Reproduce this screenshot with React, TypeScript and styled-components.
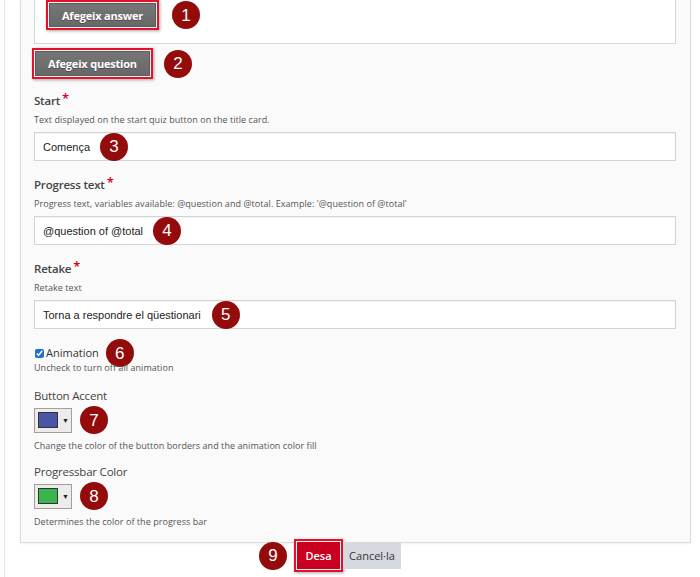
import React from "react"
import styled, { createGlobalStyle } from "styled-components"

const GlobalStyle = createGlobalStyle`
  html, body {
    margin: 0;
    padding: 0;
    background: #fff;
  }
  body {
    font-family: "Open Sans", "Liberation Sans", sans-serif;
  }
`

const Page = styled.div`
  width: 700px;
  height: 577px;
  overflow: hidden;
  box-sizing: border-box;
  padding-left: 4px;
`

const Rail = styled.div`
  border-left: 1px solid #e3e3e3;
  padding-left: 15px;
  height: 100%;
  box-sizing: border-box;
  width: 687px;
`

const Panel = styled.div`
  background: #fafafa;
  border: 1px solid #dcdcdc;
  border-top: none;
  box-shadow: 0 1px 2px rgba(0, 0, 0, 0.06);
  padding: 0 14px 13px 13px;
`

const AnswersBox = styled.div`
  display: flex;
  align-items: center;
  background: #fff;
  border: 1px solid #d6d6d6;
  border-top: none;
  padding: 0 0 13px 11px;
`

const Row = styled.div<{ $top?: number; $gap?: number; $left?: number }>`
  display: flex;
  align-items: center;
  margin-top: ${(p) => p.$top ?? 0}px;
  margin-left: ${(p) => p.$left ?? 0}px;
  gap: ${(p) => p.$gap ?? 10}px;
`

const Highlight = styled.span`
  display: inline-flex;
  border: 2px solid #e5112b;
  padding: 1px;
  background: #f4f4f4;
  box-shadow: 1px 1px 3px rgba(0, 0, 0, 0.35);
`

const GrayButton = styled.button<{ $w: number; $h: number }>`
  width: ${(p) => p.$w}px;
  height: ${(p) => p.$h}px;
  border: 1px solid #5c5c5c;
  background: linear-gradient(#767676, #686868);
  color: #fff;
  font-family: "Open Sans", sans-serif;
  font-weight: 700;
  font-size: 11px;
  letter-spacing: -0.2px;
  padding: 0;
  text-shadow: 0 1px 0 rgba(0, 0, 0, 0.3);
  cursor: pointer;
`

const Badge = styled.span`
  flex: none;
  width: 28px;
  height: 28px;
  border-radius: 50%;
  background: #940b0b;
  color: #fff;
  display: inline-flex;
  align-items: center;
  justify-content: center;
  font-family: "Liberation Sans", Arial, sans-serif;
  font-size: 17px;
  line-height: 1;
`

const Field = styled.div<{ $top: number }>`
  margin-top: ${(p) => p.$top}px;
`

const Label = styled.div<{ $weight?: number; $bottom?: number }>`
  font-size: 11.5px;
  font-weight: ${(p) => p.$weight ?? 600};
  color: #444;
  line-height: 16px;
  margin-bottom: ${(p) => p.$bottom ?? 4}px;
  letter-spacing: -0.2px;
`

const Req = styled.span`
  color: #d0021b;
  font-size: 13px;
  vertical-align: top;
  margin-left: 2px;
  position: relative;
  top: -3px;
`

const Desc = styled.div<{ $top?: number; $bottom?: number }>`
  font-size: 9px;
  letter-spacing: 0.05px;
  color: #555;
  line-height: 14px;
  margin-top: ${(p) => p.$top ?? 0}px;
  margin-bottom: ${(p) => p.$bottom ?? 0}px;
`

const InputBox = styled.div`
  height: 29px;
  box-sizing: border-box;
  background: #fff;
  border: 1px solid #d3d3d3;
  box-shadow: inset 0 1px 1px rgba(0, 0, 0, 0.04);
  display: flex;
  align-items: center;
  padding-left: 8px;
  font-family: "Liberation Sans", Arial, sans-serif;
  font-size: 11px;
  color: #222;
`

const CheckLabel = styled.label`
  display: flex;
  align-items: center;
  font-size: 11px;
  color: #333;
  line-height: 16px;
`

const Check = styled.input`
  width: 9px;
  height: 9px;
  margin: 0 2px 0 1px;
  accent-color: #1f6fd6;
`

const Picker = styled.div`
  width: 38px;
  height: 25px;
  box-sizing: border-box;
  border: 1px solid #a99d90;
  background: #ececec;
  display: flex;
  align-items: center;
  padding-left: 3px;
  gap: 4px;
`

const Swatch = styled.span<{ $color: string }>`
  width: 20px;
  height: 16px;
  box-sizing: border-box;
  border: 1px solid #333;
  background: ${(p) => p.$color};
`

const Caret = styled.span`
  font-size: 7px;
  color: #222;
`

const Actions = styled.div`
  display: flex;
  align-items: center;
  margin-top: -4px;
  padding-left: 239px;
`

const SaveButton = styled.button`
  width: 43px;
  height: 27px;
  border: none;
  background: #c9001f;
  color: #fff;
  font-family: "Open Sans", sans-serif;
  font-weight: 600;
  font-size: 11px;
  padding: 0;
`

const CancelButton = styled.button`
  width: 58px;
  height: 27px;
  border: none;
  background: #d6dae0;
  color: #333;
  font-family: "Open Sans", sans-serif;
  font-size: 11px;
  padding: 0;
`

type TextFieldProps = {
  top: number
  label: string
  desc: string
  value: string
  badge: number
  gap: number
}

const TextField = ({ top, label, desc, value, badge, gap }: TextFieldProps) => (
  <Field $top={top}>
    <Label>
      {label}
      <Req>*</Req>
    </Label>
    <Desc $bottom={5}>{desc}</Desc>
    <InputBox>
      <span>{value}</span>
      <Badge style={{ marginLeft: gap }}>{badge}</Badge>
    </InputBox>
  </Field>
)

type ColorFieldProps = {
  top: number
  label: string
  color: string
  desc: string
  badge: number
}

const ColorField = ({ top, label, color, desc, badge }: ColorFieldProps) => (
  <Field $top={top}>
    <Label $weight={500} $bottom={2}>{label}</Label>
    <Row $gap={8}>
      <Picker>
        <Swatch $color={color} />
        <Caret>▼</Caret>
      </Picker>
      <Badge>{badge}</Badge>
    </Row>
    <Desc $top={5}>{desc}</Desc>
  </Field>
)

export default function App() {
  return (
    <Page>
      <GlobalStyle />
      <Rail>
        <Panel>
          <AnswersBox>
            <Row $gap={13}>
              <Highlight>
                <GrayButton $w={107} $h={24}>Afegeix answer</GrayButton>
              </Highlight>
              <Badge>1</Badge>
            </Row>
          </AnswersBox>
          <Row $top={4} $gap={11} $left={-2}>
            <Highlight>
              <GrayButton $w={115} $h={25}>Afegeix question</GrayButton>
            </Highlight>
            <Badge>2</Badge>
          </Row>
          <TextField
            top={14}
            label="Start"
            desc="Text displayed on the start quiz button on the title card."
            value="Comença"
            badge={3}
            gap={10}
          />
          <TextField
            top={16}
            label="Progress text"
            desc="Progress text, variables available: @question and @total. Example: '@question of @total'"
            value="@question of @total"
            badge={4}
            gap={10}
          />
          <TextField
            top={16}
            label="Retake"
            desc="Retake text"
            value="Torna a respondre el qüestionari"
            badge={5}
            gap={11}
          />
          <Field $top={16}>
            <Row $gap={7}>
              <CheckLabel>
                <Check type="checkbox" defaultChecked />
                Animation
              </CheckLabel>
              <Badge style={{ margin: "-6px 0" }}>6</Badge>
            </Row>
            <Desc>Uncheck to turn off all animation</Desc>
          </Field>
          <ColorField
            top={13}
            label="Button Accent"
            color="#4a55a6"
            desc="Change the color of the button borders and the animation color fill"
            badge={7}
          />
          <ColorField
            top={11}
            label="Progressbar Color"
            color="#38b54e"
            desc="Determines the color of the progress bar"
            badge={8}
          />
        </Panel>
        <Actions>
          <Badge style={{ marginRight: 7 }}>9</Badge>
          <Highlight>
            <SaveButton>Desa</SaveButton>
          </Highlight>
          <CancelButton>Cancel·la</CancelButton>
        </Actions>
      </Rail>
    </Page>
  )
}
